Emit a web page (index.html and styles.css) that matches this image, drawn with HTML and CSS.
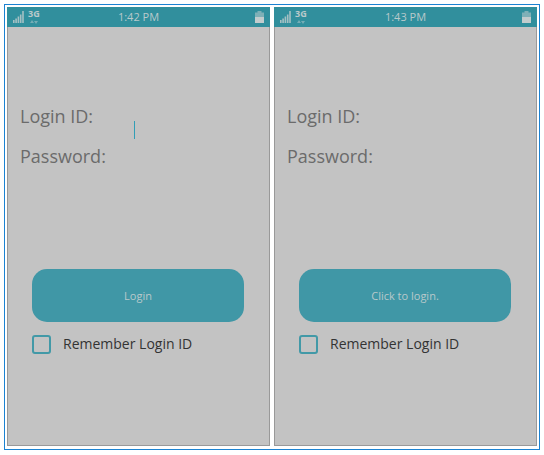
FILE: index.html
```html
<!DOCTYPE html>
<html lang="en">
<head>
<meta charset="utf-8">
<meta name="viewport" content="width=device-width, initial-scale=1">
<title>Login</title>
<link rel="stylesheet" href="styles.css">
</head>
<body>
<main class="frame">
  <section class="phone">
    <header class="status">
      <div class="network">
        <svg class="signal" viewBox="0 0 11 12" aria-hidden="true"><path d="M0 9h1.6v3H0zM2.3 7.5h1.6V12H2.3zM4.6 5.5h1.6V12H4.6zM6.9 3.5h1.6V12H6.9zM9.2 0h1.6v12H9.2z"/></svg>
        <div class="data">
          <span class="band">3G</span>
          <svg class="arrows" viewBox="0 0 8 4" aria-hidden="true"><path d="M0 3 2 0l2 3zM4 1h4L6 4z"/></svg>
        </div>
      </div>
      <time>1:42 PM</time>
      <svg class="battery" viewBox="0 0 9 12" aria-hidden="true"><path class="empty" d="M2.5 0h4v1.5H9V6H0V1.5h2.5z"/><path d="M0 6h9v6H0z"/></svg>
    </header>
    <form class="form">
      <div class="row">
        <label for="id-a">Login ID:</label>
        <div class="field"><input id="id-a" type="text"><span class="caret"></span></div>
      </div>
      <div class="row">
        <label for="pw-a">Password:</label>
        <div class="field"><input id="pw-a" type="password"></div>
      </div>
      <div class="actions">
        <button class="login" type="button">Login</button>
        <label class="remember"><input type="checkbox"><span>Remember Login ID</span></label>
      </div>
    </form>
  </section>
  <section class="phone">
    <header class="status">
      <div class="network">
        <svg class="signal" viewBox="0 0 11 12" aria-hidden="true"><path d="M0 9h1.6v3H0zM2.3 7.5h1.6V12H2.3zM4.6 5.5h1.6V12H4.6zM6.9 3.5h1.6V12H6.9zM9.2 0h1.6v12H9.2z"/></svg>
        <div class="data">
          <span class="band">3G</span>
          <svg class="arrows" viewBox="0 0 8 4" aria-hidden="true"><path d="M0 3 2 0l2 3zM4 1h4L6 4z"/></svg>
        </div>
      </div>
      <time>1:43 PM</time>
      <svg class="battery" viewBox="0 0 9 12" aria-hidden="true"><path class="empty" d="M2.5 0h4v1.5H9V6H0V1.5h2.5z"/><path d="M0 6h9v6H0z"/></svg>
    </header>
    <form class="form">
      <div class="row">
        <label for="id-b">Login ID:</label>
        <div class="field"><input id="id-b" type="text"></div>
      </div>
      <div class="row">
        <label for="pw-b">Password:</label>
        <div class="field"><input id="pw-b" type="password"></div>
      </div>
      <div class="actions">
        <button class="login" type="button">Click to login.</button>
        <label class="remember"><input type="checkbox"><span>Remember Login ID</span></label>
      </div>
    </form>
  </section>
</main>
</body>
</html>
```

FILE: styles.css
```css
* { box-sizing: border-box; }

body {
  margin: 0;
  min-height: 100vh;
  padding: 4px 4px 5px;
  display: flex;
  background: #fff;
  font-family: "Open Sans", "Noto Sans", sans-serif;
}

.frame {
  flex: 1;
  display: grid;
  grid-template-columns: 1fr 1fr;
  gap: 4px;
  padding: 2px 2px 3px;
  border: 1px solid #1b82d2;
}

.phone {
  display: flex;
  flex-direction: column;
  background: #c3c3c3;
  box-shadow: inset 0 0 0 1px #999;
}

.status {
  display: grid;
  grid-template-columns: 1fr auto 1fr;
  align-items: center;
  height: 20px;
  padding: 0 6px;
  background: #318f9d;
  color: #b9c9cb;
  font-size: 11px;
  line-height: 20px;
}

.status svg { display: block; fill: #a5c0c4; }

.network { display: flex; align-items: center; gap: 4px; }
.signal { width: 11px; height: 12px; }
.data { display: flex; flex-direction: column; align-items: center; gap: 2px; }
.band { font-size: 9px; line-height: 8px; font-weight: 700; }
.status .arrows { width: 8px; height: 4px; fill: #75adb5; }
.battery { width: 9px; height: 12px; justify-self: end; }
.status .battery { fill: #c2cccd; }
.battery .empty { fill: #7fb0b7; }

.form { padding: 69px 13px 0; }

.row {
  display: grid;
  grid-template-columns: 114px 1fr;
  align-items: center;
  height: 40px;
  color: #6b6b6b;
  font-size: 18px;
}

.field { position: relative; }

.field input {
  display: block;
  width: 100%;
  height: 28px;
  padding: 0;
  border: 0;
  outline: 0;
  background: transparent;
  color: inherit;
  font: inherit;
}

.caret {
  position: absolute;
  left: 0;
  top: 19px;
  width: 1px;
  height: 18px;
  background: #329eb6;
}

.actions { padding: 93px 13px 0 12px; }

.login {
  display: block;
  width: 100%;
  height: 53px;
  padding: 0;
  border: 0;
  border-radius: 15px;
  background: #4097a6;
  color: #b9c9cb;
  font: inherit;
  font-size: 11px;
}

.remember {
  display: flex;
  align-items: center;
  gap: 12px;
  margin-top: 12px;
  color: #333;
  font-size: 14px;
  line-height: 20px;
}

.remember input {
  appearance: none;
  width: 19px;
  height: 19px;
  margin: 0;
  border: 2px solid #4299a7;
  border-radius: 3px;
}

.remember input:checked { background: #4299a7; }
```
